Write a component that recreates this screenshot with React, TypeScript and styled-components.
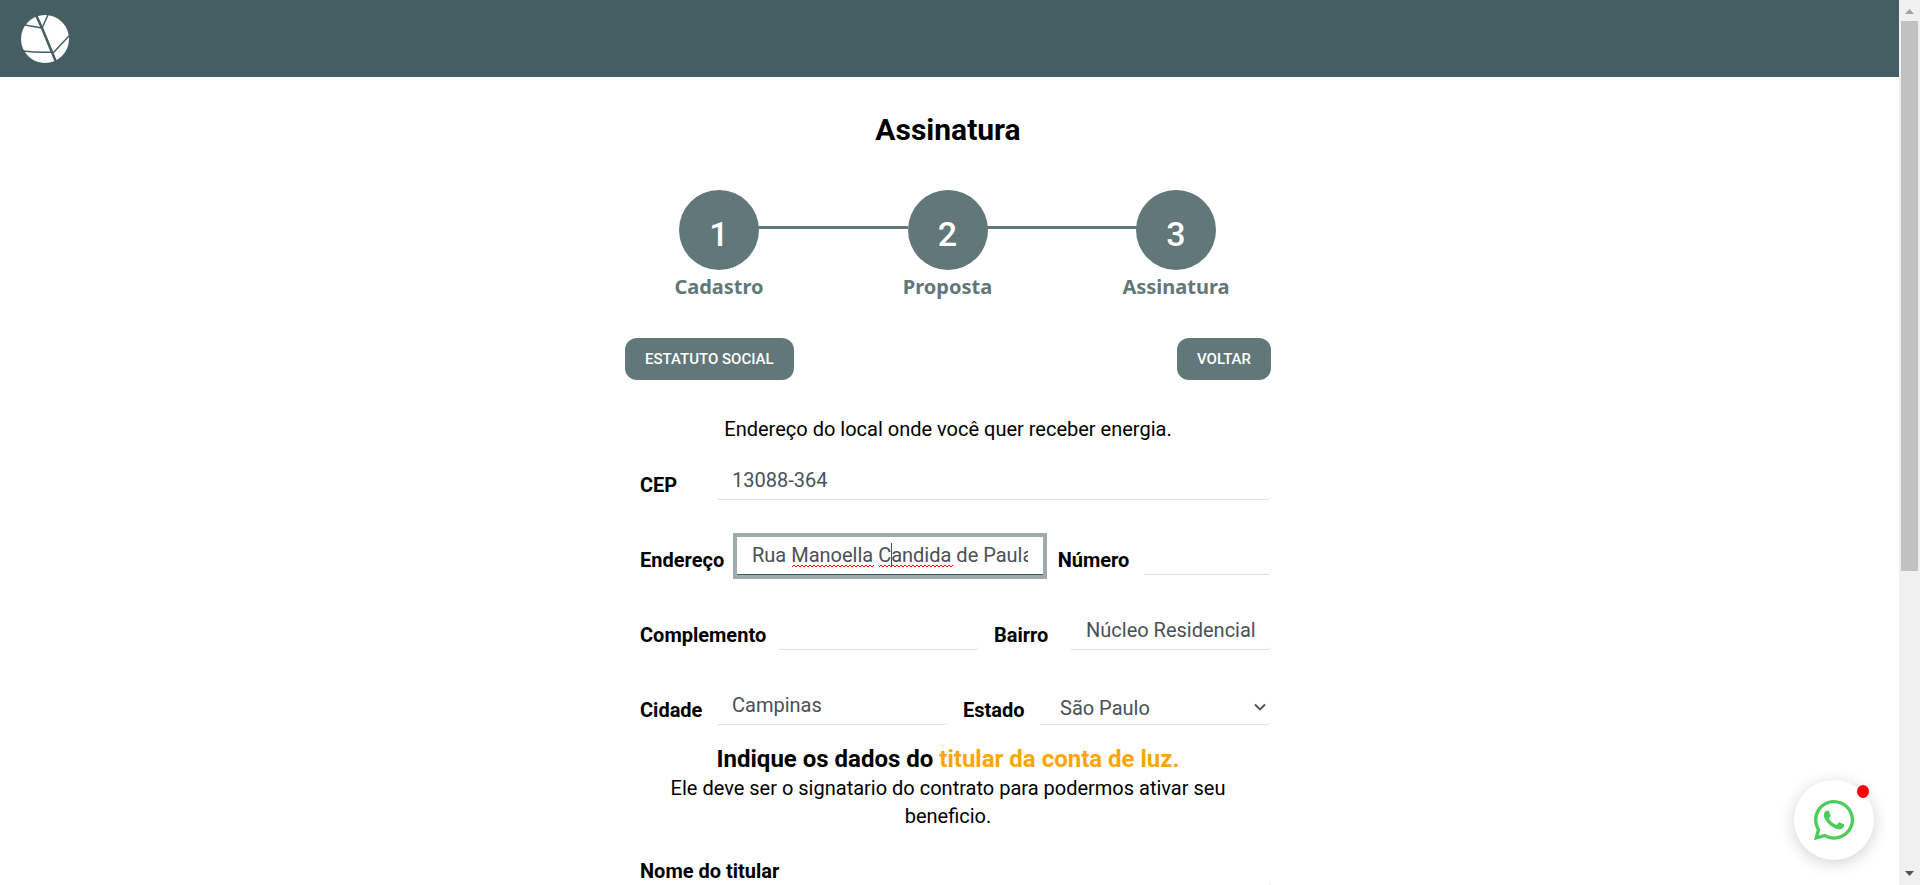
import React, { useState } from "react";
import styled, { createGlobalStyle } from "styled-components";
import { FaWhatsapp } from "react-icons/fa";

const GlobalStyle = createGlobalStyle`
  *, *::before, *::after { box-sizing: border-box; }
  body {
    margin: 0;
    overflow: hidden;
    background: #fff;
    color: #000;
    font-family: Roboto, "Liberation Sans", sans-serif;
    font-size: 20px;
    line-height: 28px;
  }
`;

const slate = "#617779";

const Shell = styled.div`
  display: flex;
  height: 100vh;
  overflow: hidden;
`;

const Page = styled.div`
  flex: 1;
  min-width: 0;
  overflow: hidden;
`;

const Header = styled.header`
  display: flex;
  align-items: center;
  height: 77px;
  padding: 0 21px;
  background: #455e63;
`;

const LogoLink = styled.a`
  display: block;
  height: 48px;
  svg { display: block; }
`;

const Main = styled.main`
  width: 100%;
  max-width: 646px;
  margin: 0 auto;
`;

const Content = styled.div`
  padding-right: 3px;
`;

const Title = styled.h1`
  margin: 0;
  padding-top: 34px;
  font-size: 30px;
  line-height: 38px;
  font-weight: 700;
  text-align: center;
`;

const Steps = styled.ol`
  display: flex;
  justify-content: space-between;
  margin: 41px 38px 0 37px;
  padding: 0;
  list-style: none;
`;

const Step = styled.li`
  position: relative;
  display: flex;
  flex-direction: column;
  align-items: center;
  width: 114px;
  color: ${slate};
  font-family: "Noto Sans", "Open Sans", sans-serif;
  font-weight: 700;
  &:not(:last-child)::after {
    content: "";
    position: absolute;
    top: 36px;
    left: 96px;
    width: 150px;
    height: 3px;
    background: ${slate};
  }
`;

const StepNumber = styled.span`
  display: flex;
  align-items: center;
  justify-content: center;
  width: 80px;
  height: 80px;
  padding-top: 7px;
  border-radius: 50%;
  background: ${slate};
  color: #fff;
  font: 500 34px/40px Roboto, sans-serif;
`;

const StepLabel = styled.span`
  padding-top: 3px;
`;

const Actions = styled.div`
  display: flex;
  justify-content: space-between;
  margin-top: 37px;
`;

const Button = styled.button`
  height: 42px;
  padding: 0 20px;
  border: 0;
  border-radius: 12px;
  background: ${slate};
  color: #fff;
  font: 500 15px/20px Roboto, sans-serif;
  text-transform: uppercase;
`;

const Intro = styled.p`
  margin: 35px 0 19px;
  text-align: center;
`;

const Row = styled.div<{ $columns: string }>`
  display: grid;
  grid-template-columns: ${(p) => p.$columns};
  height: 38px;
  margin-bottom: 37px;
`;

const Label = styled.label`
  padding: 9px 0 0 15px;
  font-weight: 700;
  line-height: 28px;
  white-space: nowrap;
`;

const Field = styled.div`
  position: relative;
  min-width: 0;
`;

const Input = styled.input<{ $active?: boolean }>`
  display: block;
  width: 100%;
  height: 38px;
  padding: 0 15px 1px;
  border: 0;
  border-bottom: 1px solid ${(p) => (p.$active ? "#455e63" : "#dee2e6")};
  border-radius: ${(p) => (p.$active ? "0" : "0 0 4px 0")};
  outline: 0;
  background: #fff;
  box-shadow: ${(p) => (p.$active ? "0 0 0 4px #9dabae" : "none")};
  color: #495057;
  font: 400 20px/28px Roboto, sans-serif;
`;

const Select = styled.select`
  display: block;
  width: 100%;
  height: 38px;
  padding: 4px 30px 0 20px;
  border: 0;
  border-bottom: 1px solid #dee2e6;
  border-radius: 0 0 4px 0;
  outline: 0;
  appearance: none;
  background: #fff;
  color: #495057;
  font: 400 20px/28px Roboto, sans-serif;
`;

const Chevron = styled.svg`
  position: absolute;
  top: 16px;
  right: 5px;
  pointer-events: none;
`;

const EditMarks = styled.svg`
  position: absolute;
  top: 0;
  left: 0;
  pointer-events: none;
`;

const Subtitle = styled.h2`
  margin: -17px 0 0;
  font-size: 24px;
  line-height: 28px;
  text-align: center;
`;

const Highlight = styled.span`
  color: orange;
`;

const Note = styled.p`
  margin: 1px 0 18px;
  padding: 0 30px;
  text-align: center;
`;

const Chat = styled.button`
  position: fixed;
  right: 46px;
  bottom: 25px;
  display: flex;
  align-items: center;
  justify-content: center;
  width: 80px;
  height: 80px;
  padding: 0;
  border: 0;
  border-radius: 50%;
  background: #fff;
  color: #4dcb5d;
  box-shadow: 0 3px 16px rgba(0, 0, 0, 0.18);
  &::after {
    content: "";
    position: absolute;
    top: 5px;
    right: 5px;
    width: 12px;
    height: 13px;
    border-radius: 50%;
    background: #f00;
  }
`;

const Scrollbar = styled.div`
  display: flex;
  flex-direction: column;
  align-items: center;
  width: 21px;
  background: #f0f0f0;
`;

const Arrow = styled.svg`
  flex: none;
  width: 17px;
  height: 21px;
`;

const Track = styled.div`
  flex: 1;
  width: 17px;
`;

const Thumb = styled.div`
  height: 65.3%;
  background: #c1c1c1;
`;

const squiggle = (from: number, to: number) => {
  let d = `M${from} 30`;
  for (let x = from + 2, up = true; x <= to; x += 2, up = !up) d += `L${x} ${up ? 28 : 30}`;
  return d;
};

type TextFieldProps = {
  id: string;
  label: string;
  initial?: string;
  active?: boolean;
  children?: React.ReactNode;
};

function TextField({ id, label, initial = "", active, children }: TextFieldProps) {
  const [value, setValue] = useState(initial);
  return (
    <>
      <Label htmlFor={id}>{label}</Label>
      <Field>
        <Input id={id} $active={active} value={value} onChange={(e) => setValue(e.target.value)} />
        {children}
      </Field>
    </>
  );
}

export default function App() {
  return (
    <Shell>
      <GlobalStyle />
      <Page>
        <Header>
          <LogoLink href="#" aria-label="Início">
            <svg width="48" height="48" viewBox="0 0 48 48">
              <circle cx="24" cy="24" r="24" fill="#fff" />
              <g fill="none" stroke="#455e63">
                <path d="M15 0L21 13L35 47" strokeWidth="2.5" />
                <path d="M21 13L27 0M21 13L4 10" strokeWidth="1.5" />
                <path d="M48 21L33 37Q18 38 2 36" strokeWidth="1.5" />
              </g>
            </svg>
          </LogoLink>
        </Header>
        <Content>
          <Main>
            <Title>Assinatura</Title>
            <Steps>
              {["Cadastro", "Proposta", "Assinatura"].map((name, i) => (
                <Step key={name}>
                  <StepNumber>{i + 1}</StepNumber>
                  <StepLabel>{name}</StepLabel>
                </Step>
              ))}
            </Steps>
            <Actions>
              <Button type="button">Estatuto social</Button>
              <Button type="button">Voltar</Button>
            </Actions>
            <Intro>Endereço do local onde você quer receber energia.</Intro>
            <form>
              <Row $columns="92px minmax(0, 1fr)">
                <TextField id="cep" label="CEP" initial="13088-364" />
              </Row>
              <Row $columns="112px minmax(0, 12fr) 101px minmax(0, 5fr)">
                <TextField id="endereco" label="Endereço" initial="Rua Manoella Candida de Paula" active>
                  <EditMarks width="300" height="38" aria-hidden="true">
                    <path d={squiggle(55, 137)} fill="none" stroke="#f00" />
                    <path d={squiggle(142, 216)} fill="none" stroke="#f00" />
                    <path d="M154.5 6V30" stroke="#495057" />
                  </EditMarks>
                </TextField>
                <TextField id="numero" label="Número" />
              </Row>
              <Row $columns="154px minmax(0, 1fr) 92px minmax(0, 1fr)">
                <TextField id="complemento" label="Complemento" />
                <TextField id="bairro" label="Bairro" initial="Núcleo Residencial" />
              </Row>
              <Row $columns="92px minmax(0, 1fr) 92px minmax(0, 1fr)">
                <TextField id="cidade" label="Cidade" initial="Campinas" />
                <Label htmlFor="estado">Estado</Label>
                <Field>
                  <Select id="estado" defaultValue="SP">
                    <option value="SP">São Paulo</option>
                  </Select>
                  <Chevron width="12" height="9" viewBox="0 0 12 9" aria-hidden="true">
                    <path d="M1 1.5L6 6.5L11 1.5" fill="none" stroke="#495057" strokeWidth="1.8" />
                  </Chevron>
                </Field>
              </Row>
              <Subtitle>
                Indique os dados do <Highlight>titular da conta de luz.</Highlight>
              </Subtitle>
              <Note>Ele deve ser o signatario do contrato para podermos ativar seu beneficio.</Note>
              <Row $columns="169px minmax(0, 1fr)">
                <TextField id="titular" label="Nome do titular" />
              </Row>
            </form>
          </Main>
        </Content>
      </Page>
      <Scrollbar aria-hidden="true">
        <Arrow viewBox="0 0 17 21">
          <path d="M4 14L8.5 9L13 14Z" fill="#a3a3a3" />
        </Arrow>
        <Track>
          <Thumb />
        </Track>
        <Arrow viewBox="0 0 17 21">
          <path d="M4 7L8.5 12L13 7Z" fill="#505050" />
        </Arrow>
      </Scrollbar>
      <Chat type="button" aria-label="WhatsApp">
        <FaWhatsapp size={46} />
      </Chat>
    </Shell>
  );
}
